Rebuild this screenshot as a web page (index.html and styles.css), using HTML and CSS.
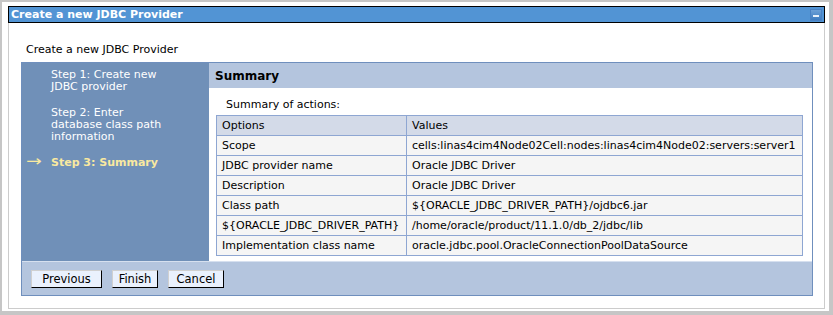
FILE: index.html
```html
<!DOCTYPE html>
<html>
<head>
<meta charset="utf-8">
<link rel="stylesheet" href="styles.css">
</head>
<body>
<div class="window">
  <div class="portlet">
    <div class="titlebar">
      <span class="title">Create a new JDBC Provider</span>
      <span class="minbtn"><span class="dash"></span></span>
    </div>
    <div class="content">
      <div class="pagetitle">Create a new JDBC Provider</div>
      <div class="wizard">
        <div class="main">
          <div class="nav">
            <div class="step">Step 1: Create new JDBC provider</div>
            <div class="step">Step 2: Enter database class path information</div>
            <div class="step current"><span class="arrow">&#8594;</span>Step 3: Summary</div>
          </div>
          <div class="panel">
            <div class="panelhead">Summary</div>
            <div class="panelbody">
              <div class="caption">Summary of actions:</div>
              <table class="summary">
                <tr class="head"><td class="c1">Options</td><td>Values</td></tr>
                <tr><td class="c1">Scope</td><td>cells:linas4cim4Node02Cell:nodes:linas4cim4Node02:servers:server1</td></tr>
                <tr><td class="c1">JDBC provider name</td><td>Oracle JDBC Driver</td></tr>
                <tr><td class="c1">Description</td><td>Oracle JDBC Driver</td></tr>
                <tr><td class="c1">Class path</td><td>${ORACLE_JDBC_DRIVER_PATH}/ojdbc6.jar</td></tr>
                <tr><td class="c1">${ORACLE_JDBC_DRIVER_PATH}</td><td>/home/oracle/product/11.1.0/db_2/jdbc/lib</td></tr>
                <tr><td class="c1">Implementation class name</td><td>oracle.jdbc.pool.OracleConnectionPoolDataSource</td></tr>
              </table>
            </div>
          </div>
        </div>
        <div class="buttons">
          <button class="btn btn-prev">Previous</button>
          <button class="btn btn-finish">Finish</button>
          <button class="btn btn-cancel">Cancel</button>
        </div>
      </div>
    </div>
  </div>
</div>
</body>
</html>
```

FILE: styles.css
```css
html, body {
  margin: 0;
  padding: 0;
}
body {
  background: #c6c6c6;
  width: 833px;
  height: 315px;
  overflow: hidden;
  font-family: "DejaVu Sans", Verdana, sans-serif;
  font-size: 11px;
  color: #000;
}
.window {
  margin: 2px 4px 0 2px;
  width: 827px;
  height: 309px;
  background: #fff;
  padding-top: 4px;
  padding-left: 6px;
  box-sizing: border-box;
}
.portlet {
  width: 817px;
  height: 303px;
  border: 1px solid #cccccc;
  border-top: none;
  box-sizing: border-box;
}
.titlebar {
  height: 17px;
  margin-left: -1px;
  margin-right: -1px;
  background: #5294d4;
  border: 1px solid #000;
  box-sizing: border-box;
  display: flex;
  align-items: center;
  justify-content: space-between;
  padding: 0 2px 0 2px;
}
.title {
  color: #fff;
  font-weight: bold;
  font-size: 11px;
}
.minbtn {
  width: 12px;
  height: 12px;
  background: linear-gradient(#6c9fd6, #3f7cc0);
  border: 1px solid #4a82c4;
  box-sizing: border-box;
  display: flex;
  align-items: center;
  justify-content: center;
  padding-top: 3px;
}
.dash {
  width: 6px;
  height: 2px;
  background: #e8f0fa;
}
.content {
  padding: 20px 0 0 12px;
}
.pagetitle {
  padding-left: 5px;
  height: 19px;
  line-height: 14px;
}
.wizard {
  width: 792px;
  height: 234px;
  border: 1px solid #6f8fbd;
  box-sizing: border-box;
  display: flex;
  flex-direction: column;
}
.main {
  display: flex;
  height: 198px;
}
.nav {
  width: 187px;
  background: #7090b8;
  padding-top: 6px;
  box-sizing: border-box;
}
.step {
  color: #fff;
  padding-left: 29px;
  padding-right: 36px;
  line-height: 12px;
  margin-bottom: 14px;
}
.step.current {
  color: #f9e9a0;
  font-weight: bold;
  position: relative;
}
.arrow {
  position: absolute;
  left: 4px;
  top: -2px;
  font-weight: normal;
  font-size: 15px;
  transform: scaleX(1.25);
  transform-origin: left center;
}
.panel {
  flex: 1;
  display: flex;
  flex-direction: column;
}
.panelhead {
  height: 25px;
  background: #b4c5de;
  font-weight: bold;
  font-size: 12px;
  line-height: 27px;
  padding-left: 6px;
}
.panelbody {
  padding-left: 7px;
}
.caption {
  padding: 11px 0 0 10px;
  height: 16px;
  line-height: 12px;
}
.summary {
  border-collapse: collapse;
  width: 587px;
  border: 1px solid #8ea6d2;
}
.summary td {
  border: 1px solid #8ea6d2;
  height: 19px;
  padding: 0 5px;
  background: #f5f5f5;
  white-space: nowrap;
  line-height: 13px;
}
.summary td.c1 {
  width: 179px;
}
.summary tr.head td {
  background: #d3dae8;
}
.buttons {
  flex: 1;
  background: #b4c5de;
  border-top: 1px solid #d6e0ef;
  display: flex;
  align-items: flex-start;
  padding: 8px 0 0 9px;
  gap: 10px;
}
.btn {
  font-family: "DejaVu Sans", Verdana, sans-serif;
  font-size: 11.5px;
  height: 18px;
  padding: 0;
  background: #eaf1fd;
  border: 1px solid;
  border-color: #d0d0d0 #000 #000 #d0d0d0;
  color: #000;
  line-height: 14px;
}
.btn-prev { width: 71px; }
.btn-finish { width: 46px; }
.btn-cancel { width: 56px; }
```
